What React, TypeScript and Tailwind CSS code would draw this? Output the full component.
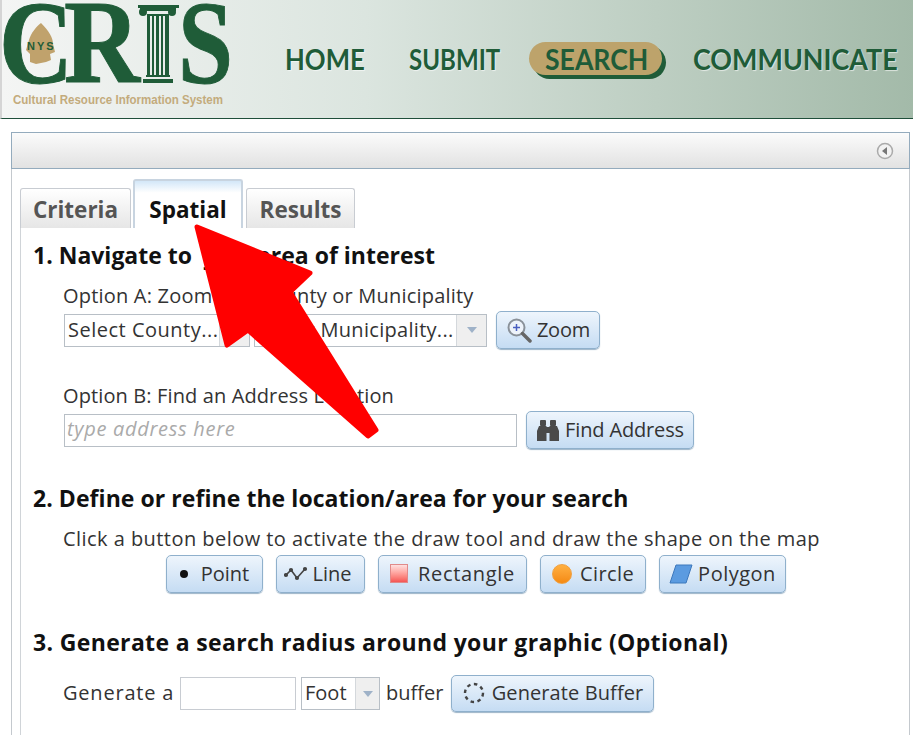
const body = "[font-family:'Open_Sans',sans-serif]";

function Logo() {
  return (
    <svg width="232" height="112" viewBox="0 0 232 112" className="-ml-[2px] shrink-0">
      <g fill="#1f5c38" stroke="#1f5c38" strokeWidth="1" fontFamily="'Liberation Serif', serif" fontWeight="700" fontSize="119">
        <text x="-1" y="83" textLength="74" lengthAdjust="spacingAndGlyphs">C</text>
        <text x="64" y="82" textLength="76" lengthAdjust="spacingAndGlyphs">R</text>
        <text x="178" y="83" textLength="55" lengthAdjust="spacingAndGlyphs">S</text>
      </g>
      {/* column */}
      <g fill="#1f5c38">
        <rect x="138" y="5" width="41" height="3" />
        <circle cx="143" cy="12" r="4" />
        <circle cx="172" cy="12" r="4" />
        <rect x="140" y="8" width="36" height="3" />
        <rect x="147" y="14" width="22" height="2" />
        <rect x="147" y="16" width="3" height="59" />
        <rect x="152" y="16" width="2" height="59" />
        <rect x="156" y="16" width="3" height="59" />
        <rect x="161" y="16" width="2" height="59" />
        <rect x="165" y="16" width="4" height="59" />
        <rect x="146" y="75" width="24" height="2" />
        <rect x="143" y="79" width="30" height="4" />
      </g>
      {/* arrowhead */}
      <path d="M41 23 C49 31 53 38 53 44 L55 52 L50 54 L51 60 L46 62 L36 64 L30 62 L30 54 L26 50 L29 40 C31 33 36 27 41 23 Z" fill="#c0a26c" />
      <text x="27" y="50" fill="#1f5c38" fontFamily="'Liberation Sans', sans-serif" fontWeight="700" fontSize="11" letterSpacing="2">NYS</text>
      <text x="13" y="104" fill="#c3ab7c" fontFamily="'Liberation Sans', sans-serif" fontWeight="700" fontSize="13" textLength="210" lengthAdjust="spacingAndGlyphs">Cultural Resource Information System</text>
    </svg>
  );
}

function NavItem({ label, className }: { label: string; className: string }) {
  return (
    <span className={`block origin-left font-['Lato',sans-serif] text-[#1f5c38] [text-shadow:1px_1px_1px_#ffffff99] ${className}`}>
      {label}
    </span>
  );
}

function Btn({ className, children }: { className: string; children: React.ReactNode }) {
  return (
    <div className={`flex items-center justify-center rounded-[5px] border border-[#8fb0cc] bg-gradient-to-b from-[#eef5fc] to-[#c5dcf3] pb-[1px] shadow-[0_1px_1px_#9db4c8] text-[#333] text-[20px] ${className}`}>
      {children}
    </div>
  );
}

function Select({ text, className, arrow, textClass }: { text: string; className: string; arrow: string; textClass?: string }) {
  return (
    <div className={`flex items-stretch border border-[#b8bfc6] bg-white text-[20px] text-[#333] ${className}`}>
      <span className={`flex-1 min-w-0 pl-[3px] leading-[30px] whitespace-nowrap overflow-hidden ${textClass ?? ''}`}>{text}</span>
      <span className={`flex shrink-0 items-center justify-center border-l border-[#d4d8dc] bg-[#efefef] ${arrow}`}>
        <span className="w-0 h-0 border-x-[5px] border-x-transparent border-t-[6px] border-t-[#9fb2c8]" />
      </span>
    </div>
  );
}

function Heading({ className, children }: { className: string; children: React.ReactNode }) {
  return <h2 className={`text-[23px] leading-[30px] font-bold text-[#111] whitespace-nowrap ${className}`}>{children}</h2>;
}

export default function App() {
  return (
    <div className={`relative h-[735px] w-[913px] overflow-hidden bg-white ${body}`}>
      {/* Header */}
      <header className="flex h-[119px] items-start border-b border-[#1f4f3a] border-l-[2px] border-l-[#d5d5d5] bg-gradient-to-r from-[#f4f5f4] via-[#dbe5df] via-40% to-[#a3baa9]">
        <Logo />
        <nav className="ml-[53px] mt-[42px] flex h-[33px] items-center text-[28px] font-bold whitespace-nowrap">
          <NavItem label="HOME" className="w-[124px] scale-x-[0.92]" />
          <NavItem label="SUBMIT" className="w-[120px] scale-x-[0.86]" />
          <div className="flex h-[33px] w-[133px] items-center rounded-[17px] bg-[#bda36b] pl-[16px] shadow-[4px_4px_0_#1f5c38]">
            <NavItem label="SEARCH" className="scale-x-[0.95] [text-shadow:none]" />
          </div>
          <NavItem label="COMMUNICATE" className="ml-[31px] scale-x-[0.96]" />
        </nav>
      </header>

      {/* Panel */}
      <div className="mx-[11px] mt-[13px] h-[620px] w-[899px] border-x border-x-[#c4c9ce]">
        <div className="flex h-[37px] items-center justify-end border border-[#94abbd] -mx-px bg-gradient-to-b from-[#fbfbfb] to-[#e2e2e2] pr-[15px]">
          <svg width="18" height="18" viewBox="0 0 18 18">
            <circle cx="9" cy="9" r="7.5" fill="#f2f2f2" stroke="#aaa" strokeWidth="1.5" />
            <path d="M11 5 L6 9 L11 13 Z" fill="#777" />
          </svg>
        </div>

        {/* Tabs */}
        <div className="ml-[8px] mt-[9px] flex h-[50px] items-end gap-[2px] text-[22.5px] font-bold">
          <div className="flex h-[40px] w-[111px] items-center justify-center rounded-t-[3px] border border-b-0 border-[#c8ccd2] bg-gradient-to-b from-white to-[#e6e6e6] pt-[2px] text-[#555]">Criteria</div>
          <div className="flex h-[49px] w-[110px] items-center justify-center rounded-t-[3px] border-x-[2px] border-t-[2px] border-[#c8d4e0] bg-gradient-to-b from-[#d3e7f8] from-0% to-white to-25% pt-[10px] text-[#111]">Spatial</div>
          <div className="ml-[1px] flex h-[40px] w-[109px] items-center justify-center rounded-t-[3px] border border-b-0 border-[#c8ccd2] bg-gradient-to-b from-white to-[#e6e6e6] pt-[2px] text-[#555]">Results</div>
        </div>

        {/* Tab content */}
        <div className="ml-[8px] h-[520px] border-l border-[#d0d4d8] pl-[12px] text-[20px] text-[#333]">
          <Heading className="pt-[12px] box-content">1. Navigate to <span className="ml-[5px] -mr-[5px]">your</span> area of interest</Heading>
          <div className="ml-[30px]">
            <p className="mt-[13px] leading-[26px] tracking-[0.2px]">Option A: Zoom to a County or Municipality</p>
            <div className="ml-[1px] mt-[2px] flex items-center">
              <Select text="Select County..." className="h-[33px] w-[186px]" arrow="w-[30px]" textClass="tracking-[0.5px]" />
              <Select text="Select Municipality..." className="ml-[4px] h-[33px] w-[233px]" arrow="w-[30px]" textClass="tracking-[0.3px]" />
              <Btn className="ml-[9px] h-[38px] w-[104px] gap-[5px] tracking-[-0.2px]">
                <svg width="26" height="26" viewBox="0 0 26 26">
                  <circle cx="10.5" cy="10.5" r="8" fill="#eef3fa" stroke="#8a9199" strokeWidth="2" />
                  <path d="M16.5 16.5 L24 24" stroke="#666" strokeWidth="3.5" strokeLinecap="round" />
                  <path d="M7 10.5 H14 M10.5 7 V14" stroke="#4a5fc0" strokeWidth="1.5" />
                </svg>
                Zoom
              </Btn>
            </div>
            <p className="mt-[34px] leading-[26px] tracking-[0.12px]">Option B: Find an Address Location</p>
            <div className="ml-[1px] mt-[2px] flex items-center">
              <div className="h-[33px] w-[453px] border border-[#b8bfc6] bg-white pl-[2px] leading-[28px] italic tracking-[0.7px] text-[#aaa]">type address here</div>
              <Btn className="ml-[9px] h-[38px] w-[168px] gap-[5px] tracking-[-0.15px]">
                <svg width="24" height="24" viewBox="0 0 24 24" fill="#4a4a4a">
                  <rect x="4" y="2" width="6" height="6" rx="1" />
                  <rect x="14" y="2" width="6" height="6" rx="1" />
                  <path d="M3 8 H10.5 V23 H1 V13 Z" />
                  <path d="M13.5 8 H21 L23 13 V23 H13.5 Z" />
                  <rect x="10" y="9" width="4" height="6" />
                </svg>
                Find Address
              </Btn>
            </div>
          </div>

          <Heading className="mt-[34px] tracking-[0.06px]">2. Define or refine the location/area for your search</Heading>
          <p className="ml-[30px] mt-[13px] leading-[26px] tracking-[0.45px] whitespace-nowrap">Click a button below to activate the draw tool and draw the shape on the map</p>
          <div className="ml-[133px] mt-[3px] flex gap-[13px]">
            <Btn className="h-[38px] w-[97px] gap-[13px]">
              <span className="h-[8px] w-[8px] rounded-full bg-[#111]" />
              Point
            </Btn>
            <Btn className="h-[38px] w-[89px] gap-[5px] pr-[6px]">
              <svg width="24" height="16" viewBox="0 0 24 16" fill="none" stroke="#444" strokeWidth="1.6">
                <path d="M2 9 L7 4 L13 12 L21 3" />
                <circle cx="2" cy="9" r="1.3" fill="#444" />
                <circle cx="7" cy="4" r="1.3" fill="#444" />
                <circle cx="13" cy="12" r="1.3" fill="#444" />
                <circle cx="21" cy="3" r="1.3" fill="#444" />
              </svg>
              Line
            </Btn>
            <Btn className="h-[38px] w-[149px] gap-[10px] tracking-[0.7px]">
              <span className="h-[19px] w-[18px] border border-[#e08a8a] bg-gradient-to-b from-[#fde0e0] to-[#f45555]" />
              Rectangle
            </Btn>
            <Btn className="h-[38px] w-[106px] gap-[8px] tracking-[0.4px]">
              <span className="h-[20px] w-[20px] rounded-full border border-[#f0a040] bg-gradient-to-b from-[#ffb040] to-[#f58a10]" />
              Circle
            </Btn>
            <Btn className="h-[38px] w-[127px] gap-[5px] tracking-[0.5px]">
              <svg width="24" height="20" viewBox="0 0 24 20">
                <path d="M7 1 H23 L17 19 H1 Z" fill="#5b9be0" stroke="#3d78bc" />
              </svg>
              Polygon
            </Btn>
          </div>

          <Heading className="mt-[34px] tracking-[0.35px]">3. Generate a search radius around your graphic (Optional)</Heading>
          <div className="ml-[30px] mt-[18px] flex h-[37px] items-center whitespace-nowrap">
            <span className="w-[117px] -translate-y-[1px] tracking-[0.8px]">Generate a</span>
            <div className="h-[33px] w-[116px] border border-[#c8ccd2] bg-white" />
            <Select text="Foot" className="ml-[5px] h-[33px] w-[79px]" arrow="w-[24px]" />
            <span className="ml-[6px] w-[65px] -translate-y-[1px]">buffer</span>
            <Btn className="h-[37px] w-[203px] gap-[6px] tracking-[0.1px]">
              <svg width="24" height="24" viewBox="0 0 24 24" fill="none">
                <circle cx="12" cy="12" r="9" stroke="#444" strokeWidth="2.4" strokeDasharray="3.5 3.5" />
              </svg>
              Generate Buffer
            </Btn>
          </div>
        </div>
      </div>

      {/* Red annotation arrow */}
      <svg className="absolute left-0 top-0 pointer-events-none" width="913" height="735" viewBox="0 0 913 735">
        <path
          d="M197 227 L310 273 L290 292 L376 430 L368 436 L248 330 L227 345 Z"
          fill="#ff0000"
          stroke="#ff0000"
          strokeWidth="5"
          strokeLinejoin="round"
        />
      </svg>
    </div>
  );
}
